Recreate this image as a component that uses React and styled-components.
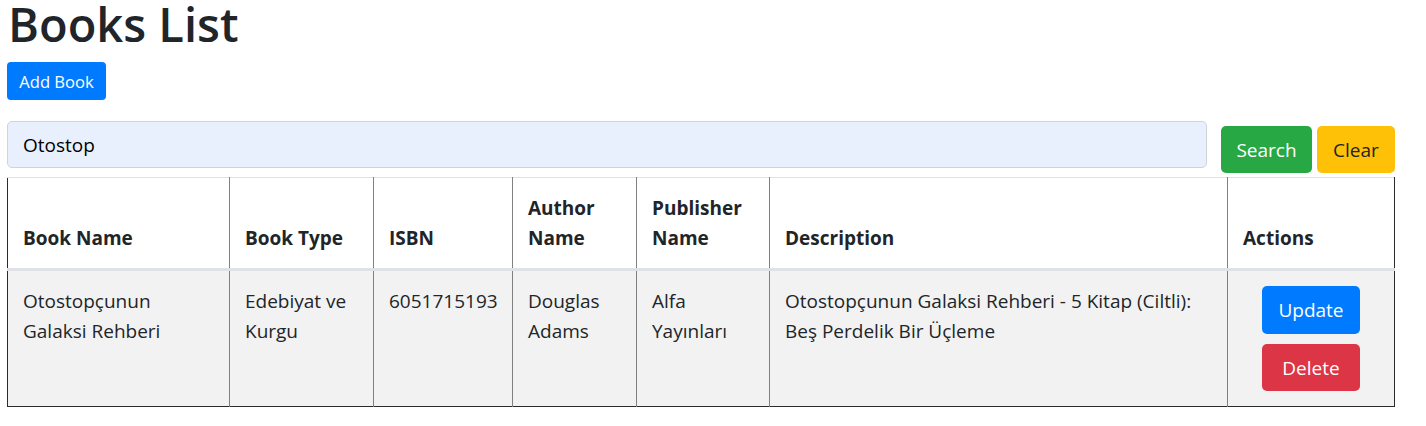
import React from "react";
import styled, { createGlobalStyle } from "styled-components";

const GlobalStyle = createGlobalStyle`
  body {
    margin: 0;
    background: #fff;
    color: #212529;
    font-family: "Open Sans", "Noto Sans", sans-serif;
  }
  * { box-sizing: border-box; }
`;

const colors = {
  primary: { bg: "#007bff", fg: "#fff" },
  success: { bg: "#28a745", fg: "#fff" },
  warning: { bg: "#ffc107", fg: "#212529" },
  danger: { bg: "#dc3545", fg: "#fff" },
};

const Page = styled.div`
  width: 1395px;
  padding-left: 7px;
`;

const Title = styled.h1`
  margin: 0 0 14px 1px;
  font-size: 47px;
  line-height: 48px;
  font-weight: 600;
`;

const Button = styled.button`
  display: inline-flex;
  align-items: center;
  justify-content: center;
  width: ${(p) => p.$w}px;
  height: ${(p) => p.$h || 47}px;
  padding: 0;
  border: none;
  border-radius: ${(p) => (p.$small ? 4 : 5)}px;
  background: ${(p) => colors[p.$variant].bg};
  color: ${(p) => colors[p.$variant].fg};
  font-family: inherit;
  font-size: ${(p) => (p.$small ? 16.6 : 19)}px;
  cursor: pointer;
`;

const SearchRow = styled.div`
  display: flex;
  align-items: flex-start;
  margin: 21px 0 4px;

  ${Button} {
    margin-top: 5px;
  }
`;

const SearchInput = styled.input`
  width: 1200px;
  height: 47px;
  margin-right: 14px;
  padding: 0 15px;
  border: 1px solid #ced4da;
  border-radius: 5px;
  background: #e8f0fe;
  color: #000;
  font-family: inherit;
  font-size: 19px;
  outline: none;
`;

const ButtonGap = styled.span`
  width: 5px;
`;

const Table = styled.table`
  width: 1387px;
  table-layout: fixed;
  border-collapse: collapse;
  border: 1px solid #2b2b2b;
  border-top: 1px solid #dee2e6;
  font-size: 19px;
  line-height: 30px;
`;

const Th = styled.th`
  padding: 15px;
  text-align: left;
  vertical-align: bottom;
  font-weight: 700;
  border-left: 1px solid #808080;
  border-right: 1px solid #808080;
  border-top: 1px solid #dee2e6;
  border-bottom: 3px solid #dee2e6;
  &:first-child { border-left-color: #2b2b2b; }
  &:last-child { border-right-color: #2b2b2b; }
`;

const Row = styled.tr`
  background: #f2f2f2;
`;

const Td = styled.td`
  padding: 15px;
  vertical-align: top;
  border-left: 1px solid #808080;
  border-right: 1px solid #808080;
  &:first-child { border-left-color: #2b2b2b; }
  &:last-child { border-right-color: #2b2b2b; }
`;

const Actions = styled.div`
  display: flex;
  flex-direction: column;
  align-items: center;
  gap: 10px;
`;

const columns = [
  ["Book Name", 222],
  ["Book Type", 144],
  ["ISBN", 139],
  ["Author Name", 124],
  ["Publisher Name", 133],
  ["Description", 458],
  ["Actions", 167],
];

const books = [
  {
    name: "Otostopçunun Galaksi Rehberi",
    type: "Edebiyat ve Kurgu",
    isbn: "6051715193",
    author: "Douglas Adams",
    publisher: "Alfa Yayınları",
    description:
      "Otostopçunun Galaksi Rehberi - 5 Kitap (Ciltli): Beş Perdelik Bir Üçleme",
  },
];

const App = () => {
  return (
    <Page>
      <GlobalStyle />
      <Title>Books List</Title>
      <Button $variant="primary" $small $w={99} $h={38}>
        Add Book
      </Button>

      <SearchRow>
        <SearchInput defaultValue="Otostop" />
        <Button $variant="success" $w={91}>
          Search
        </Button>
        <ButtonGap />
        <Button $variant="warning" $w={78}>
          Clear
        </Button>
      </SearchRow>

      <Table>
        <colgroup>
          {columns.map(([label, w]) => (
            <col key={label} style={{ width: w }} />
          ))}
        </colgroup>
        <thead>
          <tr>
            {columns.map(([label]) => (
              <Th key={label}>{label}</Th>
            ))}
          </tr>
        </thead>
        <tbody>
          {books.map((book) => (
            <Row key={book.isbn}>
              <Td>{book.name}</Td>
              <Td>{book.type}</Td>
              <Td>{book.isbn}</Td>
              <Td>{book.author}</Td>
              <Td>{book.publisher}</Td>
              <Td>{book.description}</Td>
              <Td>
                <Actions>
                  <Button $variant="primary" $w={98} $h={48}>
                    Update
                  </Button>
                  <Button $variant="danger" $w={98}>
                    Delete
                  </Button>
                </Actions>
              </Td>
            </Row>
          ))}
        </tbody>
      </Table>
    </Page>
  );
};

export default App;
